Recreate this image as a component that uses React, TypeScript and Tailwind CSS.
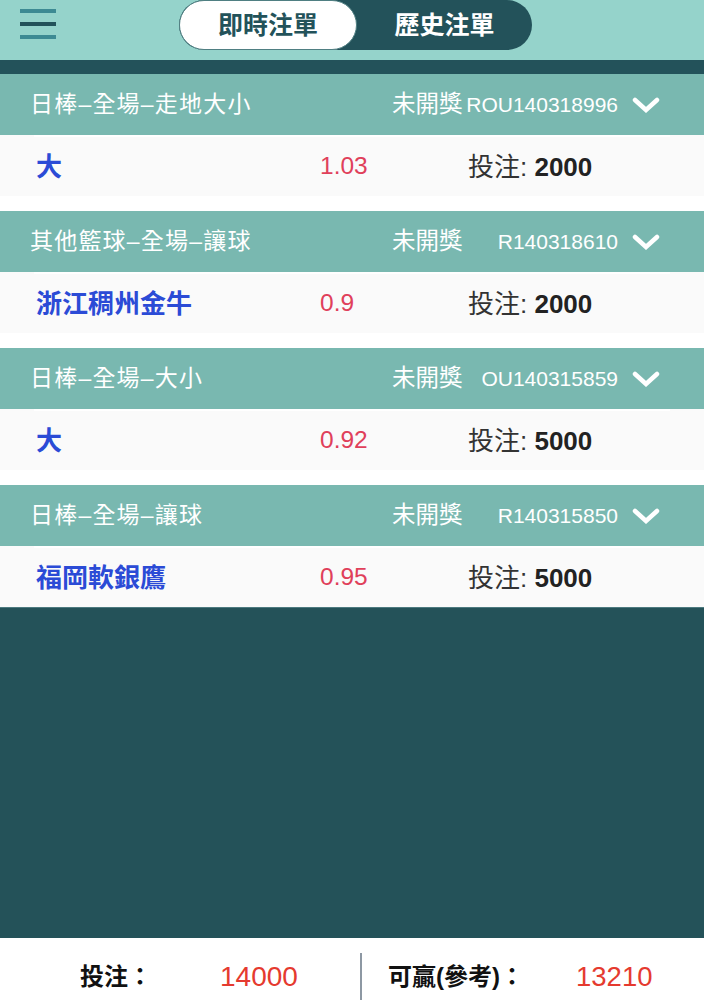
import React from "react";

type Bet = {
  title: string;
  id: string;
  pick: string;
  odds: string;
  stake: string;
};

const bets: Bet[] = [
  { title: "日棒–全場–走地大小", id: "ROU140318996", pick: "大", odds: "1.03", stake: "2000" },
  { title: "其他籃球–全場–讓球", id: "R140318610", pick: "浙江稠州金牛", odds: "0.9", stake: "2000" },
  { title: "日棒–全場–大小", id: "OU140315859", pick: "大", odds: "0.92", stake: "5000" },
  { title: "日棒–全場–讓球", id: "R140315850", pick: "福岡軟銀鷹", odds: "0.95", stake: "5000" },
];

const FONT = { fontFamily: '"Liberation Sans", "Noto Sans CJK TC", sans-serif' };

function Chevron() {
  return (
    <svg width="28" height="16" viewBox="0 0 28 16" className="shrink-0">
      <polyline
        points="3,3 14,13 25,3"
        fill="none"
        stroke="#ffffff"
        strokeWidth="4.5"
        strokeLinecap="round"
        strokeLinejoin="miter"
      />
    </svg>
  );
}

function BetCard({ bet }: { bet: Bet }) {
  return (
    <div className="flex flex-col">
      <div className="h-[61px] bg-[#79b8b0] flex items-center pl-[30px] pr-[44px] text-white">
        <div className="flex-1 text-[23px] tracking-[1.2px] leading-none whitespace-nowrap">{bet.title}</div>
        <div className="w-[268px] flex items-center">
          <span className="text-[23.5px] leading-none">未開獎</span>
          <span className="flex-1 text-right text-[21px] leading-none">{bet.id}</span>
          <span className="ml-[14px] flex items-center">
            <Chevron />
          </span>
        </div>
      </div>
      <div className="h-[61px] bg-[#fafafa] px-[34px]">
        <div className="h-full border-t-2 border-white flex items-center pl-[2px]">
          <div className="w-[284px] text-[26px] leading-none font-bold text-[#2b4bd6] whitespace-nowrap">
            {bet.pick}
          </div>
          <div className="w-[148px] text-[24.5px] leading-none text-[#e0405a]">{bet.odds}</div>
          <div className="text-[26px] leading-none text-[#333333] whitespace-nowrap">
            投注: <span className="font-semibold text-[#222222]">{bet.stake}</span>
          </div>
        </div>
      </div>
    </div>
  );
}

export default function App() {
  return (
    <div className="w-[706px] h-[1000px] bg-white overflow-hidden" style={FONT}>
      <div className="w-[704px] h-full flex flex-col">
        <header className="h-[60px] bg-[#95d3cb] flex items-start shrink-0">
          <div className="ml-[20px] mt-[9px] w-[36px] flex flex-col gap-[9px]">
            <div className="h-[4px] bg-[#3d8a93]" />
            <div className="h-[4px] bg-[#23525a]" />
            <div className="h-[4px] bg-[#3d8a93]" />
          </div>
          <div className="ml-[123px] mt-0 w-[353px] h-[50px] rounded-full bg-[#23525a] flex items-stretch">
            <div className="w-[178px] rounded-full bg-white border border-[#4f7f82] flex items-center justify-center text-[25px] font-bold text-[#23525a] leading-none">
              即時注單
            </div>
            <div className="flex-1 flex items-center justify-center text-[25px] font-bold text-white leading-none">
              歷史注單
            </div>
          </div>
        </header>
        <div className="h-[14px] bg-[#23525a] shrink-0" />
        <div className="flex flex-col gap-[15px] bg-white shrink-0">
          {bets.map((b) => (
            <BetCard key={b.id} bet={b} />
          ))}
        </div>
        <div className="flex-1 bg-[#245259] border-t border-[#4d7a7f]" />
        <footer className="h-[62px] bg-white flex items-start pt-[15px] shrink-0 overflow-hidden">
          <div className="w-[360px] h-[48px] flex items-center">
            <span className="ml-[80px] w-[140px] text-[24px] font-bold text-[#111111] leading-none">投注：</span>
            <span className="text-[28px] text-[#e53a2f] leading-none">14000</span>
          </div>
          <div className="w-[2px] h-[60px] bg-[#8d98a3]" />
          <div className="flex-1 h-[48px] flex items-center">
            <span className="ml-[26px] w-[188px] text-[24px] font-bold text-[#111111] leading-none whitespace-nowrap">
              可贏(參考)：
            </span>
            <span className="text-[27.5px] text-[#e53a2f] leading-none">13210</span>
          </div>
        </footer>
      </div>
    </div>
  );
}
